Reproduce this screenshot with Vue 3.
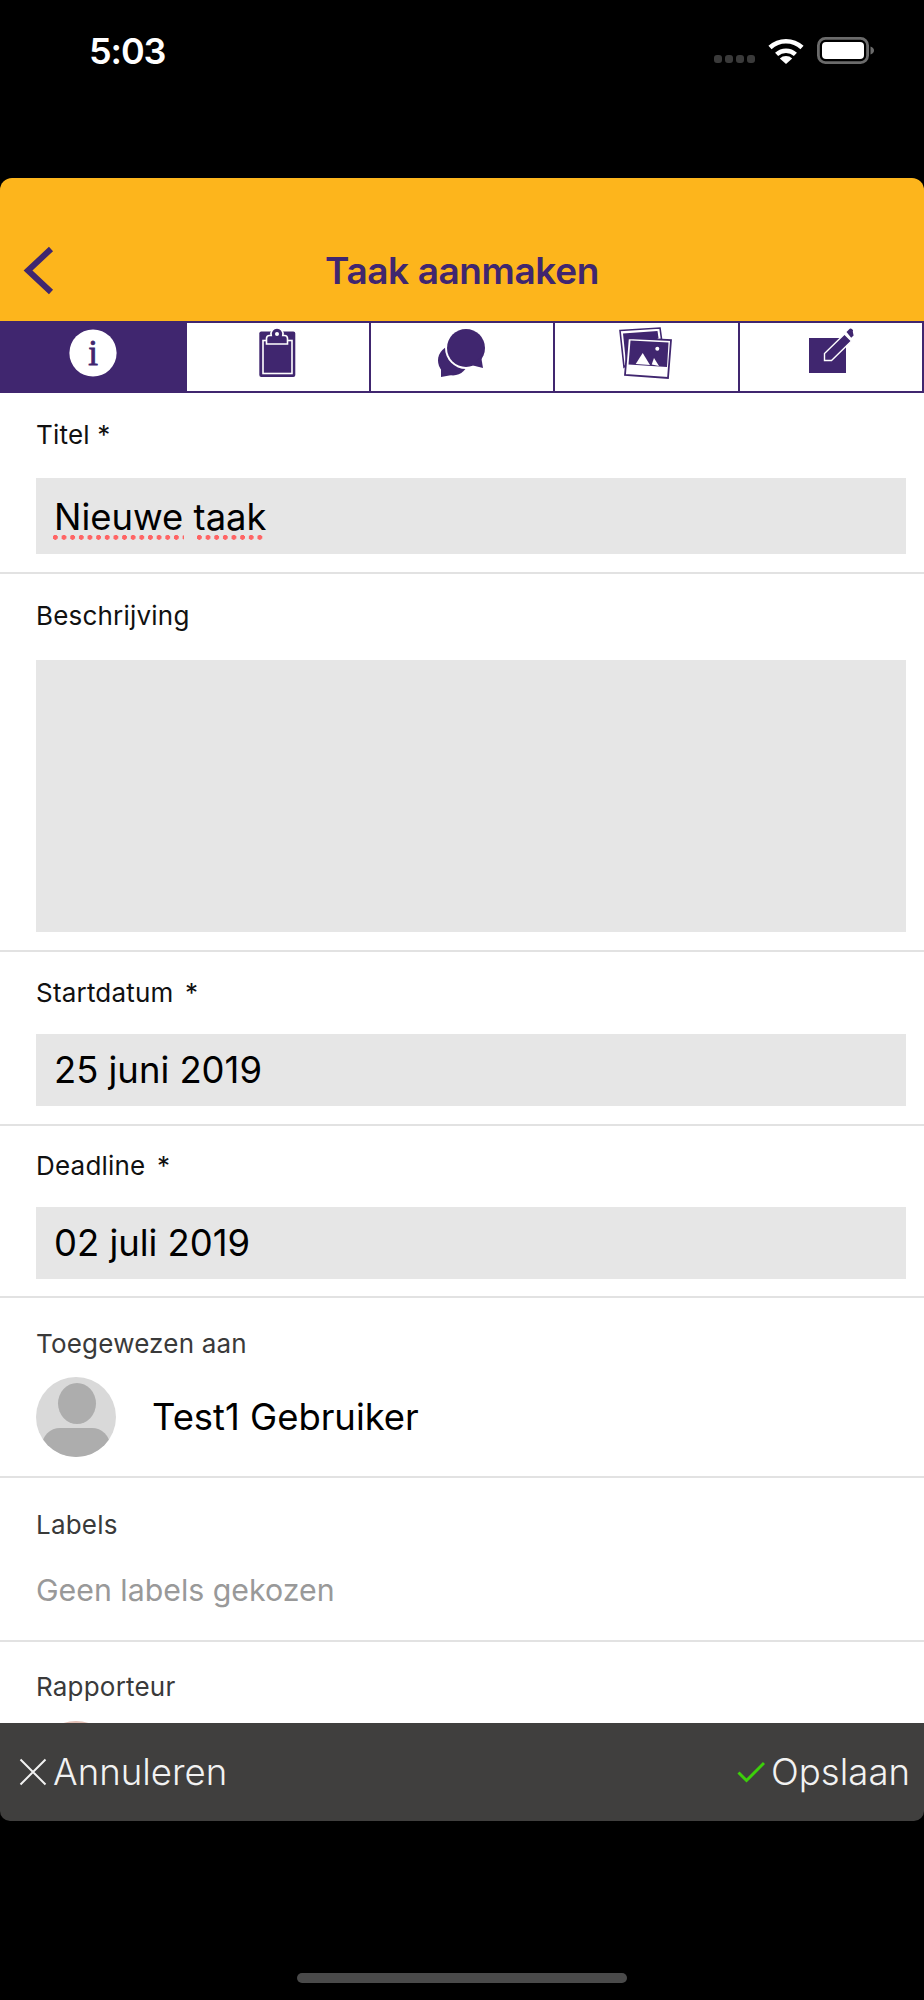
<script setup>
const title = 'Taak aanmaken'
</script>

<template>
  <div class="screen">
    <div class="status">
      <span class="time">5:03</span>
      <div class="status-icons">
        <div class="signal"><i></i><i></i><i></i><i></i></div>
        <svg class="wifi" width="36" height="26" viewBox="0 0 36 26">
          <path d="M2 9.5A23.5 23.5 0 0 1 34 9.5" fill="none" stroke="#fff" stroke-width="4.6" />
          <path d="M8.6 16.4A14 14 0 0 1 27.4 16.4" fill="none" stroke="#fff" stroke-width="4.6" />
          <path d="M18 26L11.8 20.4A9 9 0 0 1 24.2 20.4Z" fill="#fff" />
        </svg>
        <svg class="battery" width="58" height="27" viewBox="0 0 58 27">
          <rect x="1.4" y="1.4" width="49.2" height="24.2" rx="7" fill="none" stroke="#6b6b6b" stroke-width="2.8" />
          <rect x="5" y="5" width="42" height="17" rx="4" fill="#fff" />
          <path d="M53.5 9.5C56 10.2 57 12 57 13.5C57 15 56 16.8 53.5 17.5Z" fill="#6b6b6b" />
        </svg>
      </div>
    </div>

    <header class="header">
      <svg class="back" width="34" height="52" viewBox="0 0 34 52">
        <polyline points="28,3 5,24.5 28,46" fill="none" stroke="#40266f" stroke-width="6" />
      </svg>
      <h1 class="title">{{ title }}</h1>
      <span></span>
    </header>

    <nav class="tabs">
      <div class="tab tab-active">
        <svg width="60" height="52" viewBox="0 0 60 52">
          <circle cx="30" cy="26" r="23.6" fill="#fff" />
          <text x="30" y="38" text-anchor="middle" class="i-glyph">i</text>
        </svg>
      </div>
      <div class="tab">
        <svg width="60" height="52" viewBox="0 0 60 52">
          <rect x="11.3" y="4.6" width="36" height="45.4" rx="2" fill="#40266f" />
          <rect x="15" y="13.5" width="29" height="33" fill="none" stroke="#fff" stroke-width="1.6" />
          <path d="M18.5 17V11.5Q18.5 8.5 21.5 8.5H23.2A6 6 0 1 1 34.8 8.5H36.5Q39.5 8.5 39.5 11.5V17Z" fill="#40266f" stroke="#fff" stroke-width="1.6" />
          <circle cx="29" cy="7" r="2" fill="#fff" />
        </svg>
      </div>
      <div class="tab">
        <svg width="60" height="52" viewBox="0 0 60 52">
          <circle cx="21" cy="33.5" r="15" fill="#40266f" />
          <path d="M9 50V40L20 48Z" fill="#40266f" />
          <circle cx="34" cy="21" r="21" fill="#fff" />
          <circle cx="34" cy="21" r="19" fill="#40266f" />
          <path d="M41 38.5L51 41L49 29Z" fill="#40266f" />
        </svg>
      </div>
      <div class="tab">
        <svg width="60" height="52" viewBox="0 0 60 52">
          <polygon points="4,3.5 44,1 45.5,12 8,40" fill="#fff" stroke="#40266f" stroke-width="1.6" />
          <polygon points="7,6.5 41.5,4 42.5,11 10,36" fill="#40266f" />
          <polygon points="12,11 55,13 52,51 9,48" fill="#fff" stroke="#40266f" stroke-width="1.8" />
          <polygon points="14.5,13.5 52.5,15.5 51,40 12.5,37.5" fill="#40266f" />
          <polygon points="26.7,26 19.7,37 34,38" fill="#fff" />
          <polygon points="38,31 35.7,37.5 43,39" fill="#fff" />
          <circle cx="41.3" cy="21.7" r="2" fill="#fff" />
        </svg>
      </div>
      <div class="tab">
        <svg width="60" height="52" viewBox="0 0 60 52">
          <rect x="8" y="11" width="37" height="35" fill="#40266f" />
          <path d="M23.5 33.5V26.5L43.5 7L50.5 14L30.5 33.5Z" fill="#40266f" stroke="#fff" stroke-width="1.4" stroke-linejoin="miter" />
          <path d="M45.5 5L48 2.6A2.2 2.2 0 0 1 51.8 4.8L52.6 8.4L50.2 10.8Z" fill="#40266f" />
        </svg>
      </div>
    </nav>

    <main class="form">
      <section class="field field-title">
        <label class="label">Titel *</label>
        <div class="input input-title">
          <span class="value"><span class="spell spell-long">Nieuwe</span> <span class="spell spell-short">taak</span></span>
        </div>
      </section>

      <section class="field field-desc">
        <label class="label">Beschrijving</label>
        <div class="textarea"></div>
      </section>

      <section class="field field-start">
        <label class="label">Startdatum<span class="star"> *</span></label>
        <div class="input input-date">25 juni 2019</div>
      </section>

      <section class="field field-deadline">
        <label class="label">Deadline<span class="star"> *</span></label>
        <div class="input input-date">02 juli 2019</div>
      </section>

      <section class="field field-assignee">
        <label class="label label-soft">Toegewezen aan</label>
        <div class="person">
          <svg class="avatar" width="80" height="80" viewBox="0 0 80 80">
            <defs>
              <clipPath id="avatar-clip"><circle cx="40" cy="40" r="40" /></clipPath>
            </defs>
            <circle cx="40" cy="40" r="40" fill="#d9d9d9" />
            <g clip-path="url(#avatar-clip)" fill="#adadad">
              <ellipse cx="41" cy="26.5" rx="19" ry="20.5" />
              <rect x="6" y="51" width="68" height="44" rx="18" />
            </g>
          </svg>
          <span class="person-name">Test1 Gebruiker</span>
        </div>
      </section>

      <section class="field field-labels">
        <label class="label label-soft">Labels</label>
        <div class="empty">Geen labels gekozen</div>
      </section>

      <section class="field field-reporter">
        <label class="label label-soft">Rapporteur</label>
        <div class="reporter-avatar"></div>
      </section>
    </main>

    <footer class="footer">
      <div class="action">
        <svg width="28" height="28" viewBox="0 0 28 28">
          <path d="M1.5 1.5L26.5 26.5M26.5 1.5L1.5 26.5" stroke="#f2f2f2" stroke-width="2" fill="none" />
        </svg>
        <span>Annuleren</span>
      </div>
      <div class="action">
        <svg width="28" height="22" viewBox="0 0 28 22">
          <path d="M1.5 11.5L9.5 19.5L27 2" stroke="#3ccf0a" stroke-width="3" fill="none" />
        </svg>
        <span>Opslaan</span>
      </div>
    </footer>

    <div class="home-area"><div class="home-bar"></div></div>
  </div>
</template>

<style>
html,
body {
  margin: 0;
  background: #000;
}
</style>

<style scoped>
.screen {
  width: 924px;
  height: 2000px;
  background: #000;
  display: flex;
  flex-direction: column;
  font-family: Inter, "Noto Sans", sans-serif;
  overflow: hidden;
}

.status {
  height: 178px;
  flex: none;
  box-sizing: border-box;
  padding: 34px 49px 0 89px;
  display: flex;
  justify-content: space-between;
  align-items: flex-start;
}

.time {
  color: #fff;
  font-size: 36px;
  font-weight: 600;
  line-height: 34px;
  letter-spacing: -1.1px;
}

.status-icons {
  display: flex;
  align-items: flex-end;
  padding-top: 3px;
}

.signal {
  display: flex;
  gap: 3px;
  margin-right: 13px;
  margin-bottom: 1px;
}

.signal i {
  display: block;
  width: 8px;
  height: 8px;
  border-radius: 3px;
  background: #3a3a3a;
}

.wifi {
  margin-right: 13px;
}

.header {
  flex: none;
  height: 143px;
  background: #fdb51c;
  border-radius: 12px 12px 0 0;
  box-sizing: border-box;
  display: grid;
  grid-template-columns: 1fr auto 1fr;
  align-items: start;
  padding-top: 68px;
}

.back {
  margin-left: 23px;
}

.title {
  margin: 0;
  padding-top: 3px;
  color: #40266f;
  font-size: 37px;
  font-weight: 600;
  line-height: 44px;
  letter-spacing: -0.4px;
}

.tabs {
  flex: none;
  height: 72px;
  box-sizing: border-box;
  background: #40266f;
  padding: 2px 2px 2px 0;
  display: flex;
}

.tab {
  flex: 1 1 0;
  margin-left: 2px;
  background: #fff;
  display: flex;
  align-items: flex-start;
  justify-content: center;
  padding-top: 4px;
}

.tab-active {
  flex: none;
  width: 186.5px;
  margin-left: 0;
  background: #40266f;
}

.tab-active + .tab {
  margin-left: 0;
}

.i-glyph {
  font-family: "Liberation Serif", serif;
  font-size: 35px;
  font-weight: 400;
  fill: #40266f;
  stroke: #40266f;
  stroke-width: 0.8px;
}

.form {
  flex: none;
  height: 1330px;
  background: #fff;
  overflow: hidden;
}

.field {
  box-sizing: content-box;
  padding: 26px 0 18px;
  border-bottom: 2px solid #e2e2e2;
}

.field-title {
  padding-top: 27px;
}

.field-desc {
  padding-top: 27px;
}

.field-deadline {
  padding-top: 25px;
  padding-bottom: 17px;
}

.field-assignee {
  padding-top: 31px;
  padding-bottom: 19px;
}

.field-labels {
  padding-top: 32px;
  padding-bottom: 30px;
}

.field-reporter {
  padding-top: 30px;
  border-bottom: 0;
}

.label {
  display: block;
  margin-left: 36px;
  color: #111;
  font-size: 26px;
  line-height: 30px;
  letter-spacing: 0.2px;
}

.star {
  word-spacing: 4px;
}

.label-soft {
  color: #3a3a3a;
}

.input {
  margin: 26px 18px 0 36px;
  background: #e6e6e6;
  box-sizing: border-box;
  padding-left: 18px;
  display: flex;
  align-items: center;
  color: #000;
  font-size: 36.4px;
}

.input-title {
  height: 76px;
  margin-top: 28px;
}

.input-date {
  height: 72px;
}

.value {
  display: block;
  line-height: 44px;
  margin-top: 2px;
}

.spell {
  position: relative;
}

.spell::after {
  content: "";
  position: absolute;
  bottom: -1px;
  height: 5px;
  background: radial-gradient(circle at 2.3px 2.3px, #ff6464 2.2px, transparent 2.7px) left top / 8.65px 5px repeat-x;
}

.spell-long::after {
  left: -1px;
  right: -1px;
}

.spell-short::after {
  left: 3px;
  right: 2px;
}

.textarea {
  margin: 29px 18px 0 36px;
  height: 272px;
  background: #e6e6e6;
}

.person {
  margin: 18px 0 0 36px;
  display: flex;
  align-items: center;
  gap: 36px;
}

.avatar {
  display: block;
  flex: none;
}

.person-name {
  color: #000;
  font-size: 36.4px;
  line-height: 44px;
}

.empty {
  margin: 30px 0 0 36px;
  color: #999;
  font-size: 30.3px;
  line-height: 40px;
}

.reporter-avatar {
  margin: 19px 0 0 36px;
  width: 80px;
  height: 80px;
  border-radius: 50%;
  background: #e2bfb5;
}

.footer {
  flex: none;
  height: 98px;
  background: #403f3e;
  border-radius: 0 0 10px 10px;
  box-sizing: border-box;
  padding: 0 14px 0 19px;
  display: flex;
  align-items: center;
  justify-content: space-between;
}

.action {
  display: flex;
  align-items: center;
  gap: 6px;
  color: #f2f2f2;
  font-size: 36.6px;
  font-weight: 300;
  line-height: 44px;
}

.home-area {
  flex: 1;
  display: flex;
  justify-content: center;
  align-items: flex-end;
  padding-bottom: 17px;
}

.home-bar {
  width: 330px;
  height: 10px;
  border-radius: 5px;
  background: #4a4a4a;
}
</style>
